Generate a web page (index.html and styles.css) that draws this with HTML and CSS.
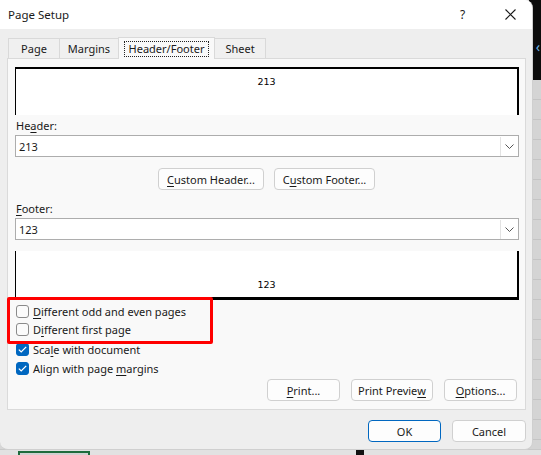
FILE: index.html
```html
<!DOCTYPE html>
<html>
<head>
<meta charset="utf-8">
<link rel="stylesheet" href="styles.css">
</head>
<body>
<div class="desk">
  <div class="app-dark"><span class="app-arrow">&lsaquo;</span></div>
  <div class="app-grid"></div>
  <div class="sheet-strip"><div class="sel-cell"></div><div class="black-mark"></div></div>

  <div class="dialog">
    <div class="titlebar">
      <span class="title">Page Setup</span>
      <span class="help">?</span>
      <span class="close">
        <svg width="11" height="11" viewBox="0 0 11 11"><path d="M0.5 0.5 L10.5 10.5 M10.5 0.5 L0.5 10.5" stroke="#1a1a1a" stroke-width="1.1" fill="none"/></svg>
      </span>
    </div>

    <div class="dlg-body">
      <div class="tabs">
        <div class="tab tab-page">Page</div>
        <div class="tab tab-margins">Margins</div>
        <div class="tab tab-active"><span class="focus">Header/Footer</span></div>
        <div class="tab tab-sheet">Sheet</div>
      </div>

      <div class="panel">
        <div class="preview preview-top"><span class="pv-text">213</span></div>

        <div class="label">He<u>a</u>der:</div>
        <div class="combo"><span class="combo-text">213</span><span class="combo-btn"><svg width="9" height="5" viewBox="0 0 9 5"><path d="M0.5 0.5 L4.5 4.5 L8.5 0.5" stroke="#555" stroke-width="1" fill="none"/></svg></span></div>

        <div class="custom-row">
          <div class="btn btn-custom-h"><u>C</u>ustom Header...</div>
          <div class="btn btn-custom-f">C<u>u</u>stom Footer...</div>
        </div>

        <div class="label label-footer"><u>F</u>ooter:</div>
        <div class="combo"><span class="combo-text">123</span><span class="combo-btn"><svg width="9" height="5" viewBox="0 0 9 5"><path d="M0.5 0.5 L4.5 4.5 L8.5 0.5" stroke="#555" stroke-width="1" fill="none"/></svg></span></div>

        <div class="preview preview-bottom"><span class="pv-text">123</span></div>

        <div class="checks">
          <div class="check-row"><span class="cb"></span><span><u>D</u>ifferent odd and even pages</span></div>
          <div class="check-row"><span class="cb"></span><span>D<u>i</u>fferent first page</span></div>
          <div class="check-row row-3"><span class="cb cb-on"><svg width="9" height="7" viewBox="0 0 9 7"><path d="M0.8 3.6 L3.2 5.9 L8.2 0.9" stroke="#fff" stroke-width="1.3" fill="none"/></svg></span><span>Sca<u>l</u>e with document</span></div>
          <div class="check-row"><span class="cb cb-on"><svg width="9" height="7" viewBox="0 0 9 7"><path d="M0.8 3.6 L3.2 5.9 L8.2 0.9" stroke="#fff" stroke-width="1.3" fill="none"/></svg></span><span>Align with page <u>m</u>argins</span></div>
          <div class="highlight"></div>
        </div>

        <div class="panel-btns">
          <div class="btn btn-print"><u>P</u>rint...</div>
          <div class="btn btn-preview">Print Previe<u>w</u></div>
          <div class="btn btn-options"><u>O</u>ptions...</div>
        </div>
      </div>

      <div class="dlg-btns">
        <div class="btn btn-ok">OK</div>
        <div class="btn btn-cancel">Cancel</div>
      </div>
    </div>
  </div>
</div>
</body>
</html>
```

FILE: styles.css
```css
* { box-sizing: border-box; }
html, body { margin: 0; padding: 0; }
body {
  width: 541px;
  height: 455px;
  overflow: hidden;
  background: #d6d6d6;
  font-family: "Noto Sans", "Open Sans", sans-serif;
  font-size: 11px;
  color: #1a1a1a;
}
u { text-decoration: underline; text-underline-offset: 2px; text-decoration-thickness: 1px; }

.desk { position: relative; width: 541px; height: 455px; }

.app-dark {
  position: absolute; right: 0; top: 0; width: 12px; height: 80px; background: #0c0c0c;
}
.app-arrow { position: absolute; right: 1px; top: 40px; color: #6cb4e8; font-size: 14px; line-height: 14px; }
.app-grid {
  position: absolute; right: 0; top: 80px; width: 12px; height: 375px;
  background: repeating-linear-gradient(to bottom, #d4d4d4 0, #d4d4d4 19px, #c4c4c4 19px, #c4c4c4 20px);
}
.sheet-strip {
  position: absolute; left: 0; bottom: 0; width: 541px; height: 6px; background: #e2e2e2;
  border-top: 1px solid #c8c8c8;
}
.sel-cell { position: absolute; left: 18px; top: 1px; width: 72px; height: 6px; border: 2px solid #1e6b3c; border-bottom: none; background: #d0d0d0; }
.black-mark { position: absolute; left: 356px; top: 0; width: 8px; height: 6px; background: #111; }

.dialog {
  position: absolute; left: 0; top: 0;
  width: 533px; height: 450px;
  background: #eeeeee;
  border-radius: 0 8px 8px 8px;
  border-right: 1px solid #cfcfcf;
  border-bottom: 1px solid #cfcfcf;
  overflow: hidden;
}

.titlebar {
  height: 29px; background: #ffffff;
  display: flex; align-items: center;
  padding-left: 8px;
}
.title { font-size: 11.5px; flex: 1; }
.help { width: 8px; margin-right: 37px; font-size: 12px; }
.close { width: 11px; height: 11px; margin-right: 16px; display: flex; }

.dlg-body { padding: 8px 0 0 7px; }

.tabs { display: flex; height: 21px; padding-left: 1px; position: relative; z-index: 2; }
.tab {
  margin-top: 1px; height: 20px;
  border: 1px solid #d9d9d9; border-bottom: none;
  background: #f0f0f0;
  display: flex; align-items: center; justify-content: center;
  margin-right: -1px;
}
.tab-page { width: 52px; }
.tab-margins { width: 60px; }
.tab-sheet { width: 52px; }
.tab-active {
  margin-top: 0; height: 22px; width: 97px;
  background: #f9f9f9; position: relative; z-index: 3;
}
.focus { border: 1px dotted #222; padding: 0 4px; line-height: 14px; }

.panel {
  width: 519px; height: 352px;
  border: 1px solid #dadada;
  background: #f9f9f9;
  padding: 8px 0 8px 7px;
  position: relative;
  display: flex; flex-direction: column;
}

.preview {
  width: 504px; height: 48px; background: #ffffff;
  border-left: 1px solid #000; border-right: 2px solid #000;
  display: flex; justify-content: center;
  color: #000; flex: none;
}
.preview-top { border-top: 2px solid #000; align-items: flex-start; padding-top: 7px; }
.preview-bottom {
  margin-top: 11px; height: 49px; border-bottom: 3px solid #000;
  align-items: flex-end; padding-bottom: 7px;
}
.pv-text { font-family: "DejaVu Sans", sans-serif; font-size: 9.5px; }

.label { margin-top: 3px; height: 17px; line-height: 15px; padding-left: 1px; }
.label-footer { margin-top: 11px; }

.combo {
  width: 504px; height: 22px; background: #ffffff; flex: none;
  border: 1px solid #adadad;
  display: flex; align-items: center; justify-content: space-between;
  padding-left: 3px;
}
.combo-btn {
  width: 17px; height: 19px; margin-right: 1px;
  border-left: 1px solid #e3e3e3;
  background: #fff;
  display: flex; align-items: center; justify-content: center;
}

.btn {
  height: 22px;
  border: 1px solid #d0d0d0; border-radius: 4px;
  background: #fdfdfd;
  display: flex; align-items: center; justify-content: center;
}
.custom-row { display: flex; justify-content: flex-start; gap: 10px; margin-top: 11px; padding-left: 143px; }
.btn-custom-h { width: 106px; }
.btn-custom-f { width: 101px; }

.checks { position: relative; margin-top: 2px; padding-left: 1px; }
.check-row { display: flex; align-items: center; height: 18px; gap: 4px; }
.row-3 { margin-top: 2px; height: 19px; }
.cb {
  width: 13px; height: 13px; border-radius: 3px;
  border: 1px solid #8a8a8a; background: #fbfbfb;
  display: flex; align-items: center; justify-content: center;
}
.cb-on { background: #0067c0; border-color: #0067c0; }
.highlight {
  position: absolute; left: -8px; top: -5px;
  width: 206px; height: 47px;
  border: 3px solid #ff0000; border-radius: 2px;
}

.panel-btns { display: flex; justify-content: flex-end; gap: 11px; margin-top: auto; padding-right: 8px; }
.btn-print { width: 73px; }
.btn-preview { width: 82px; }
.btn-options { width: 73px; }

.dlg-btns { display: flex; justify-content: flex-end; gap: 11px; margin-top: 10px; padding-right: 6px; }
.btn-ok { width: 73px; border-color: #0067c0; }
.btn-cancel { width: 74px; }
```
